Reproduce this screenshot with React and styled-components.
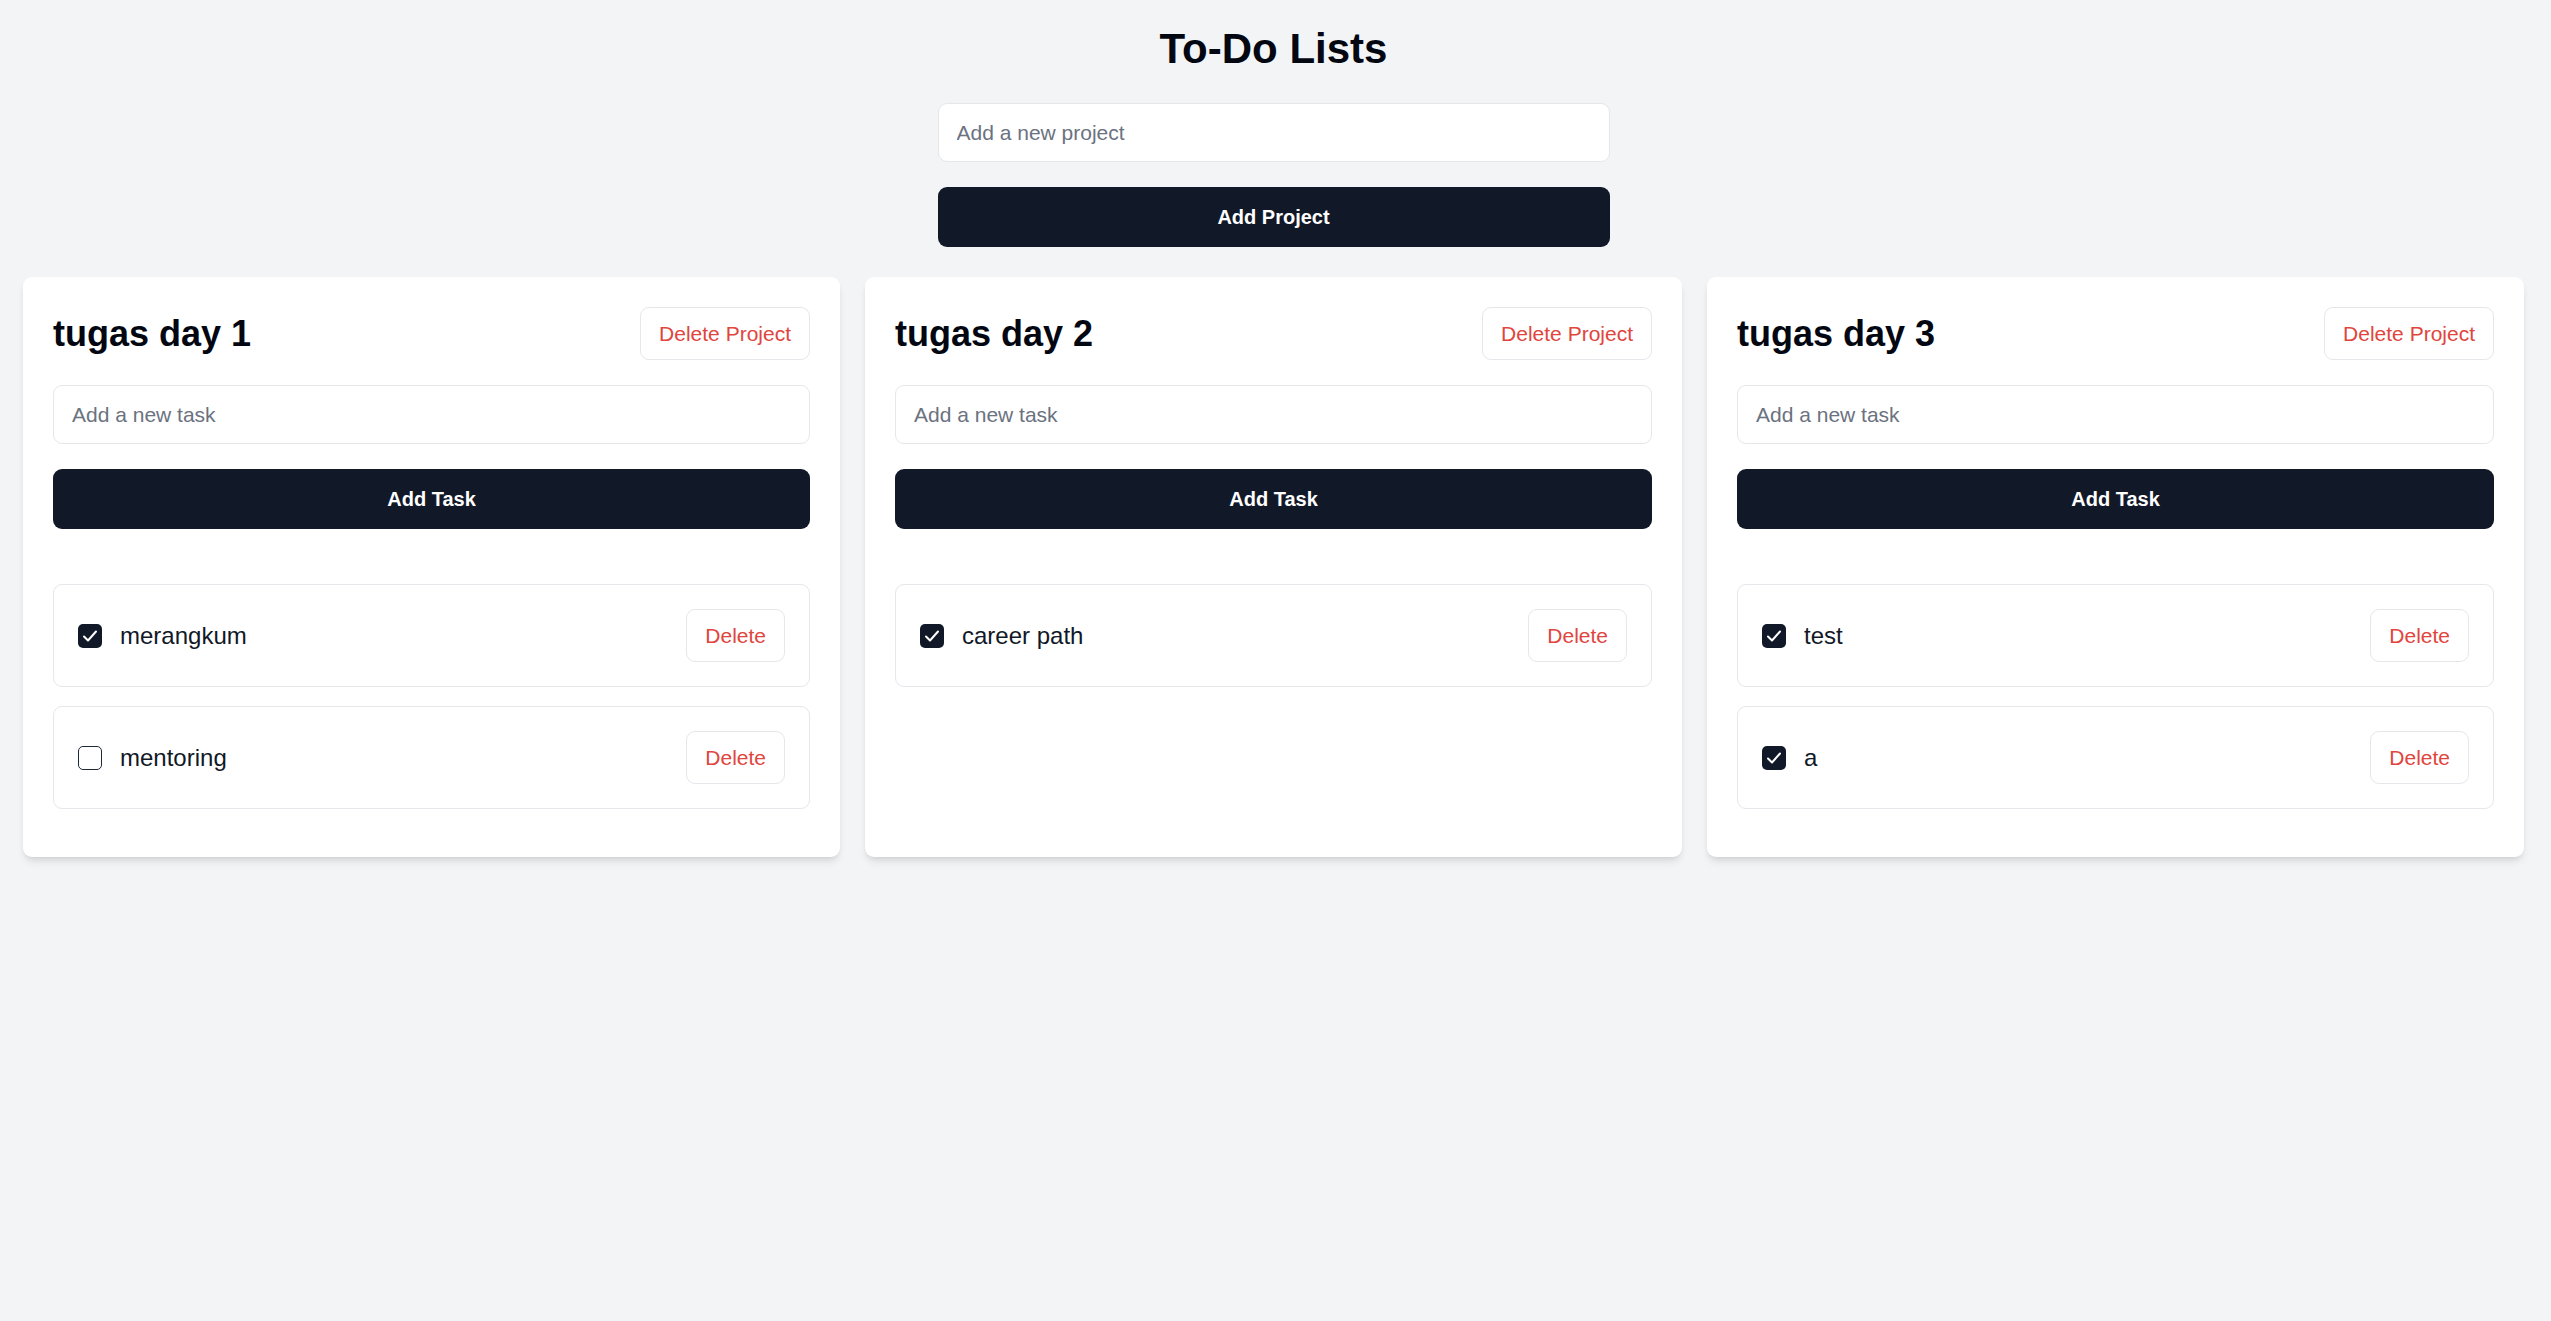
import React from 'react';
import styled, { createGlobalStyle } from 'styled-components';

const GlobalStyle = createGlobalStyle`
  * {
    box-sizing: border-box;
  }

  body {
    margin: 0;
    background-color: #f3f4f6;
    font-family: "Liberation Sans", Arial, sans-serif;
    color: #111827;
  }
`;

const Page = styled.div`
  min-height: 100vh;
  padding: 24px 27px 24px 23px;
  background-color: #f3f4f6;
`;

const Header = styled.div`
  display: flex;
  flex-direction: column;
  align-items: center;
`;

const PageTitle = styled.h1`
  margin: 0 0 30px;
  font-size: 42px;
  line-height: 49px;
  font-weight: 700;
  color: #030712;
`;

const TextInput = styled.input`
  display: block;
  width: ${({ $width }) => $width || '100%'};
  height: 59px;
  padding: 0 18px;
  border: 1px solid #e5e7eb;
  border-radius: 9px;
  background-color: #fff;
  font-family: inherit;
  font-size: 21px;
  color: #111827;
  outline: none;

  &::placeholder {
    color: #6b7280;
  }
`;

const PrimaryButton = styled.button`
  display: flex;
  align-items: center;
  justify-content: center;
  width: ${({ $width }) => $width || '100%'};
  height: 60px;
  margin-top: 25px;
  border: none;
  border-radius: 9px;
  background-color: #111827;
  color: #fff;
  font-family: inherit;
  font-size: 20px;
  font-weight: 700;
  cursor: pointer;
`;

const Grid = styled.div`
  display: grid;
  grid-template-columns: repeat(3, 1fr);
  gap: 25px;
  margin-top: 30px;
`;

const Card = styled.div`
  padding: 30px;
  border-radius: 9px;
  background-color: #fff;
  box-shadow: 0 6px 9px -2px rgba(0, 0, 0, 0.1), 0 3px 6px -3px rgba(0, 0, 0, 0.1);
`;

const CardHeader = styled.div`
  display: flex;
  align-items: center;
  justify-content: space-between;
  margin-bottom: 25px;
`;

const CardTitle = styled.h2`
  margin: 0;
  font-size: 36px;
  line-height: 48px;
  font-weight: 700;
  color: #030712;
`;

const GhostButton = styled.button`
  height: 53px;
  padding: 0 18px;
  border: 1px solid #e5e7eb;
  border-radius: 9px;
  background-color: #fff;
  color: #e0453e;
  font-family: inherit;
  font-size: 21px;
  cursor: pointer;
`;

const TaskList = styled.ul`
  display: flex;
  flex-direction: column;
  gap: 19px;
  margin: 55px 0 0;
  padding: 0 0 18px;
  list-style: none;
`;

const TaskItem = styled.li`
  display: flex;
  align-items: center;
  justify-content: space-between;
  padding: 24px;
  border: 1px solid #e5e7eb;
  border-radius: 9px;
`;

const TaskLabel = styled.label`
  display: flex;
  align-items: center;
  gap: 18px;
  font-size: 24px;
  color: #111827;
`;

const CheckBox = styled.span`
  display: flex;
  align-items: center;
  justify-content: center;
  width: 24px;
  height: 24px;
  border-radius: 5px;
  border: ${({ $checked }) => ($checked ? 'none' : '1.5px solid #1f2937')};
  background-color: ${({ $checked }) => ($checked ? '#111827' : '#fff')};
`;

const Check = () => (
  <svg width="24" height="24" viewBox="0 0 24 24" fill="none">
    <polyline
      points="6,12.5 10,16.5 18,7.5"
      stroke="#fff"
      strokeWidth="2"
      strokeLinecap="round"
      strokeLinejoin="round"
    />
  </svg>
);

const projects = [
  {
    name: 'tugas day 1',
    tasks: [
      { text: 'merangkum', done: true },
      { text: 'mentoring', done: false },
    ],
  },
  {
    name: 'tugas day 2',
    tasks: [{ text: 'career path', done: true }],
  },
  {
    name: 'tugas day 3',
    tasks: [
      { text: 'test', done: true },
      { text: 'a', done: true },
    ],
  },
];

const ProjectCard = ({ project }) => (
  <Card>
    <CardHeader>
      <CardTitle>{project.name}</CardTitle>
      <GhostButton>Delete Project</GhostButton>
    </CardHeader>
    <TextInput placeholder="Add a new task" />
    <PrimaryButton>Add Task</PrimaryButton>
    <TaskList>
      {project.tasks.map((task) => (
        <TaskItem key={task.text}>
          <TaskLabel>
            <CheckBox $checked={task.done}>{task.done && <Check />}</CheckBox>
            {task.text}
          </TaskLabel>
          <GhostButton>Delete</GhostButton>
        </TaskItem>
      ))}
    </TaskList>
  </Card>
);

const App = () => {
  return (
    <Page>
      <GlobalStyle />
      <Header>
        <PageTitle>To-Do Lists</PageTitle>
        <TextInput $width="672px" placeholder="Add a new project" />
        <PrimaryButton $width="672px">Add Project</PrimaryButton>
      </Header>
      <Grid>
        {projects.map((project) => (
          <ProjectCard key={project.name} project={project} />
        ))}
      </Grid>
    </Page>
  );
};

export default App;
